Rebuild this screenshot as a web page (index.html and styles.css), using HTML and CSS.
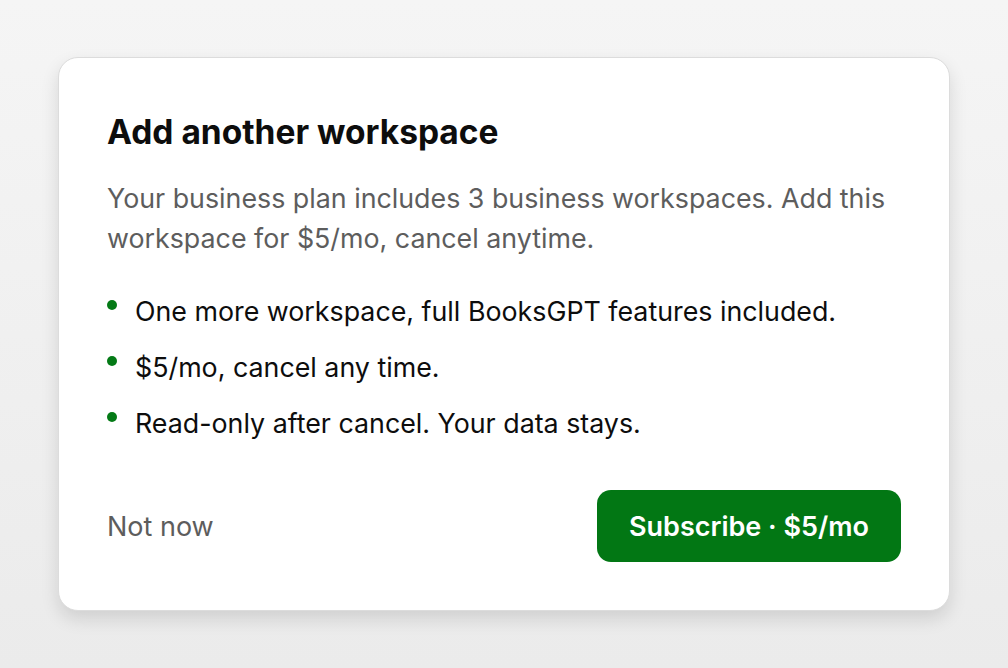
FILE: index.html
```html
<!DOCTYPE html>
<html lang="en">
<head>
    <meta charset="UTF-8">
    <meta name="viewport" content="width=device-width, initial-scale=1.0">
    <title>Add another workspace</title>
    <link rel="stylesheet" href="styles.css">
</head>
<body>

    <div class="dialog">
        <h1>Add another workspace</h1>
        <p class="desc">Your business plan includes 3 business workspaces. Add this workspace for $5/mo, cancel anytime.</p>

        <ul class="perks">
            <li>One more workspace, full BooksGPT features included.</li>
            <li>$5/mo, cancel any time.</li>
            <li>Read-only after cancel. Your data stays.</li>
        </ul>

        <div class="actions">
            <button class="later">Not now</button>
            <button class="subscribe">Subscribe · $5/mo</button>
        </div>
    </div>

</body>
</html>
```

FILE: styles.css
```css
* {
    box-sizing: border-box;
}
body {
    font-family: Inter, "Noto Sans", sans-serif;
    background: linear-gradient(to bottom, #f5f5f5, #ebebeb);
    margin: 0;
    min-height: 100vh;
    display: flex;
    align-items: center;
    justify-content: center;
}
.dialog {
    background: white;
    width: 892px;
    padding: 54px 48px 48px;
    border: 1px solid #dcdcdc;
    border-radius: 20px;
    box-shadow: 0px 8px 18px rgba(0, 0, 0, 0.12);
}
h1 {
    margin: 0;
    font-size: 33.5px;
    line-height: 40px;
    font-weight: 700;
    color: #0d0d0d;
}
.desc {
    margin: 26px 0 0;
    font-size: 26.8px;
    line-height: 40px;
    color: #5d5d5d;
}
.perks {
    list-style: none;
    margin: 33px 0 0;
    padding: 0;
    display: flex;
    flex-direction: column;
    gap: 16px;
}
.perks li {
    position: relative;
    padding-left: 28px;
    font-size: 26.8px;
    line-height: 40px;
    color: #0d0d0d;
}
.perks li::before {
    content: "";
    position: absolute;
    left: 0;
    top: 9px;
    width: 10px;
    height: 10px;
    border-radius: 50%;
    background: #047a16;
}
.actions {
    margin-top: 47px;
    display: flex;
    justify-content: space-between;
    align-items: center;
}
.actions button {
    font-family: inherit;
    font-size: 27px;
    border: none;
    cursor: pointer;
}
.later {
    background: none;
    padding: 0;
    color: #5d5d5d;
}
.subscribe {
    background: #027714;
    color: white;
    font-weight: 600;
    width: 304px;
    height: 72px;
    border-radius: 14px;
}
```
